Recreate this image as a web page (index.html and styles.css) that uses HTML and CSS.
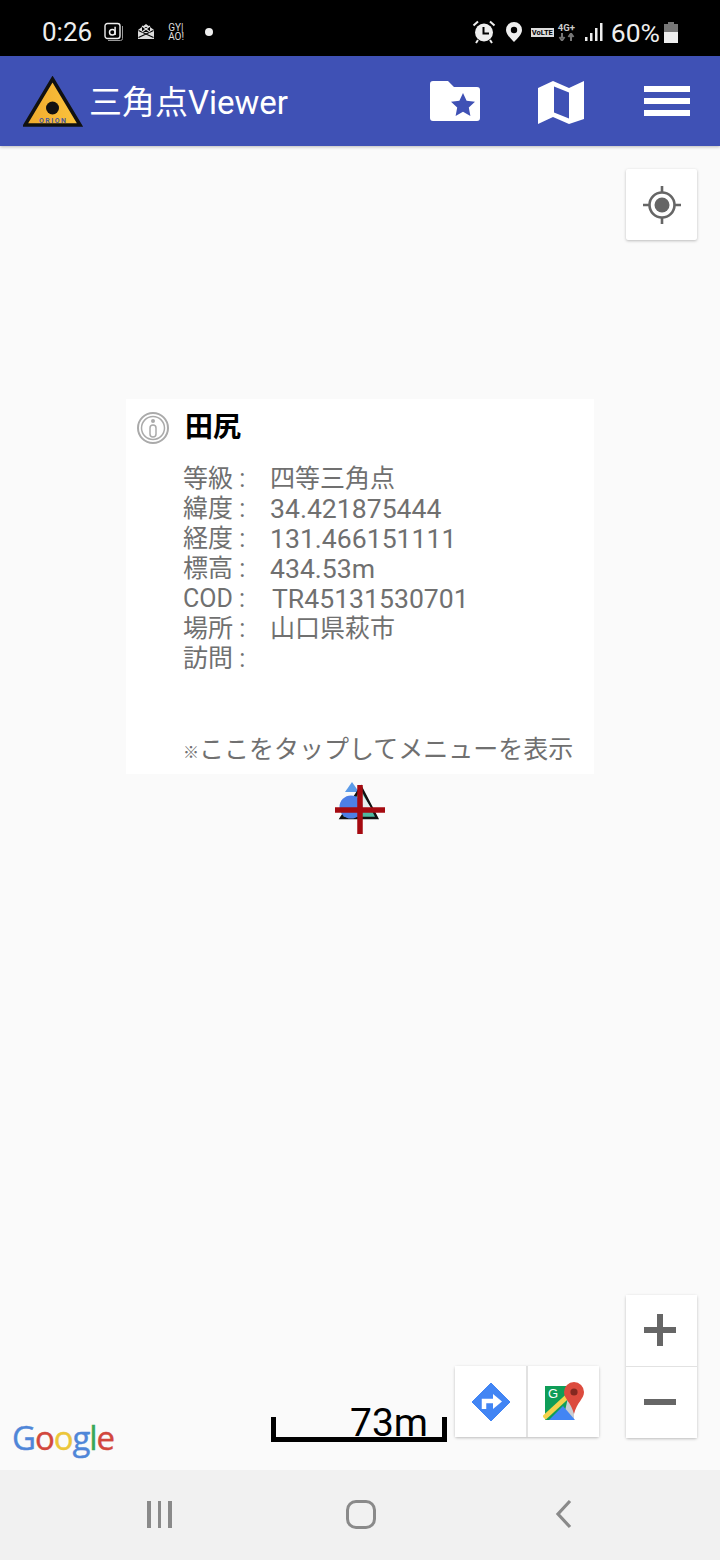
FILE: index.html
```html
<!DOCTYPE html>
<html lang="ja">
<head>
	<meta charset="utf-8" />
	<title>三角点Viewer</title>
	<link rel="stylesheet" href="styles.css">
</head>
<body>
	<div class="status-bar">
		<span class="clock">0:26</span>
		<svg class="st-d" viewBox="0 0 20 20" width="20" height="20">
			<rect x="1" y="1.5" width="15" height="15" rx="2.5" fill="none" stroke="#eee" stroke-width="1.4"/>
			<path d="M18.5 4v12.5a2 2 0 0 1-2 2H4" fill="none" stroke="#999" stroke-width="1"/>
			<circle cx="8.3" cy="10.3" r="2.8" fill="none" stroke="#eee" stroke-width="1.5"/>
			<path d="M11.1 4.8v8.3" stroke="#eee" stroke-width="1.5"/>
		</svg>
		<svg class="st-mail" viewBox="0 0 18 18" width="18" height="18">
			<path d="M1 7l8-6 8 6v9H1z" fill="#ddd"/>
			<path d="M1.5 7.5l15 7M16.5 7.5l-15 7" stroke="#000" stroke-width="1.2"/>
			<rect x="5" y="4" width="8" height="5" fill="#000"/>
			<path d="M5 3l8 6M13 3L5 9" stroke="#ddd" stroke-width="1.3"/>
		</svg>
		<span class="st-gyao">GY|<br>AO!</span>
		<span class="st-dot"></span>
		<span class="st-spacer"></span>
		<svg class="st-alarm" viewBox="0 0 24 24" width="24" height="24">
			<path d="M1.5 5.5L6 1.5M22.5 5.5L18 1.5M6 20l-2 3M18 20l2 3" stroke="#eee" stroke-width="2"/>
			<circle cx="12" cy="12.5" r="9" fill="#eee"/>
			<path d="M11.5 7v6.5H17" fill="none" stroke="#000" stroke-width="2"/>
		</svg>
		<svg class="st-pin" viewBox="0 0 18 20" width="18" height="20">
			<path d="M9 0a8 8 0 0 1 8 8c0 4.500-5 9-8 12-3-3-8-7.500-8-12a8 8 0 0 1 8-8z" fill="#eee"/>
			<circle cx="9" cy="8" r="3.200" fill="#000"/>
		</svg>
		<span class="st-volte">VoLTE</span>
		<span class="st-net">4G+<svg viewBox="0 0 18 8" width="18" height="8"><path d="M4 0v5M1.500 4L4 7.500 6.500 4M13 8V3M10.500 4L13 .5 15.500 4" fill="none" stroke="#777" stroke-width="2"/></svg></span>
		<svg class="st-signal" viewBox="0 0 20 20" width="20" height="20">
			<path d="M2 15h2.500v4H2zM7 11h2.500v8H7zM12 6h2.500v13H12zM17 1h2.500v18H17z" fill="#eee"/>
		</svg>
		<span class="st-battery-text">60%</span>
		<svg class="st-battery" viewBox="0 0 14 21" width="14" height="21">
			<path d="M4 0h6v2h4v8H0V2h4z" fill="#777"/>
			<rect y="10" width="14" height="11" fill="#eee"/>
		</svg>
	</div>

	<header class="app-bar">
		<svg class="logo" viewBox="0 0 60 52" width="60" height="52">
			<defs>
				<linearGradient id="logoFill" x1="0" x2="1" y1="0" y2="0">
					<stop offset="0" stop-color="#f0a92c"/>
					<stop offset="1" stop-color="#fbc53e"/>
				</linearGradient>
			</defs>
			<path d="M29.500 3L57 49H2z" fill="url(#logoFill)" stroke="#111" stroke-width="3.500" stroke-linejoin="miter"/>
			<circle cx="29.500" cy="32" r="6.500" fill="#111"/>
			<text class="logo-text" x="29.500" y="46.500" text-anchor="middle" textLength="27">ORION</text>
		</svg>
		<h1 class="app-title">三角点Viewer</h1>
		<div class="app-actions">
			<svg viewBox="0 0 50 40" width="50" height="40">
				<path d="M3 0h15l6 6h23a3 3 0 0 1 3 3v28a3 3 0 0 1-3 3H3a3 3 0 0 1-3-3V3a3 3 0 0 1 3-3z" fill="#fff"/>
				<path d="M33 12l3.600 7.800 8.400 1-6.200 5.800 1.600 8.400-7.400-4.200-7.400 4.200 1.600-8.400L21 20.800l8.400-1z" fill="#3f51b5"/>
			</svg>
			<svg class="map-icon" viewBox="0 0 46 46" width="46" height="46">
				<path d="M0 10l15-7 16 7 15-7v38l-15 5-16-7-15 7z" fill="#fff"/>
				<path d="M16 8.500l15 6v26l-15-6z" fill="#3f51b5"/>
			</svg>
			<div class="hamburger"><span></span><span></span><span></span></div>
		</div>
	</header>

	<main class="map">
		<button class="ctl ctl-locate">
			<svg viewBox="0 0 40 40" width="40" height="40">
				<circle cx="20" cy="20" r="12.500" fill="none" stroke="#666" stroke-width="2.600"/>
				<circle cx="20" cy="20" r="7.500" fill="#666"/>
				<path d="M20 1v6M20 33v6M1 20h6M33 20h6" stroke="#666" stroke-width="2.600"/>
			</svg>
		</button>

		<section class="info">
			<div class="info-head">
				<svg viewBox="0 0 32 32" width="32" height="32">
					<circle cx="16" cy="16" r="15" fill="none" stroke="#aaa" stroke-width="2"/>
					<circle cx="16" cy="16" r="11.500" fill="none" stroke="#aaa" stroke-width="1.500"/>
					<rect x="13" y="13" width="6" height="12" rx="3" fill="none" stroke="#aaa" stroke-width="1.500"/>
					<circle cx="16" cy="9" r="2" fill="#aaa"/>
				</svg>
				<h2 class="info-title">田尻</h2>
			</div>
			<dl class="info-rows">
				<dt>等級 :</dt><dd>四等三角点</dd>
				<dt>緯度 :</dt><dd class="num">34.421875444</dd>
				<dt>経度 :</dt><dd class="num">131.466151111</dd>
				<dt>標高 :</dt><dd class="num">434.53m</dd>
				<dt>COD :</dt><dd class="num cod">TR45131530701</dd>
				<dt>場所 :</dt><dd>山口県萩市</dd>
				<dt>訪問 :</dt><dd></dd>
			</dl>
			<p class="info-note"><span class="note-mark">※</span>ここをタップしてメニューを表示</p>
		</section>

		<svg class="marker" viewBox="0 0 50 54" width="50" height="54">
			<path d="M17 0l7 10H10z" fill="#5b9be8"/>
			<path d="M26 5l16 31H6z" fill="#4fb8a0" stroke="#111" stroke-width="2.500"/>
			<path d="M26 10L15 26h21z" fill="#e8eeee"/>
			<circle cx="16" cy="25" r="11.500" fill="#4d7fe6"/>
			<path d="M0 28h50M25 3v49" stroke="#a50a10" stroke-width="5.500"/>
		</svg>

		<div class="ctl-group zoom-group">
			<button class="ctl">
				<svg class="zoom-icon" viewBox="0 0 34 34" width="34" height="34"><path d="M17 1v32M1 17h32" stroke="#666" stroke-width="6"/></svg>
			</button>
			<button class="ctl">
				<svg class="zoom-icon" viewBox="0 0 34 34" width="34" height="34"><path d="M1 17h32" stroke="#666" stroke-width="6"/></svg>
			</button>
		</div>

		<div class="ctl-group nav-group">
			<button class="ctl">
				<svg viewBox="0 0 40 40" width="40" height="40">
					<path d="M20 1l19 19-19 19L1 20z" fill="#4285f4" stroke="#4285f4" stroke-linejoin="round" stroke-width="1"/>
					<path d="M13 27v-8h11" fill="none" stroke="#fff" stroke-width="4.500"/>
					<path d="M22 12l9 7.500-9 7.500z" fill="#fff"/>
				</svg>
			</button>
			<button class="ctl">
				<svg viewBox="0 0 42 42" width="42" height="42">
					<path d="M2 5h29v34H2z" fill="#0f9d58"/>
					<path d="M26 12l5 3v24H20z" fill="#c9cdd2"/>
					<path d="M20 25L32 39H6z" fill="#4285f4"/>
					<path d="M1 37L27 13" stroke="#f4d24c" stroke-width="5"/>
					<path d="M31 1a10 10 0 0 1 10 10c0 7-7 10-10 22-3-12-10-15-10-22A10 10 0 0 1 31 1z" fill="#dc4b3e"/>
					<circle cx="31" cy="11" r="3.600" fill="#842820"/>
					<text class="gmap-g" x="5" y="17">G</text>
				</svg>
			</button>
		</div>

		<div class="scale">
			<span class="scale-label">73m</span>
		</div>

		<div class="google"><i class="g-b">G</i><i class="g-r">o</i><i class="g-y">o</i><i class="g-b">g</i><i class="g-g">l</i><i class="g-r">e</i></div>
	</main>

	<nav class="nav-bar">
		<div class="nav-recent"><span></span><span></span><span></span></div>
		<div class="nav-home"></div>
		<svg class="nav-back" viewBox="0 0 18 30" width="18" height="30">
			<path d="M15 2L3 15l12 13" fill="none" stroke="#8a8a8a" stroke-width="3.200"/>
		</svg>
	</nav>
</body>
</html>
```

FILE: styles.css
```css
* {
	box-sizing: border-box;
}
html, body {
	height: 100%;
}
body {
	margin: 0;
	display: flex;
	flex-direction: column;
	width: 720px;
	height: 1560px;
	overflow: hidden;
	font-family: Roboto, "Noto Sans CJK JP", sans-serif;
	background-color: #fafafa;
}
svg {
	display: block;
	flex: none;
}

/* Status bar */
.status-bar {
	display: flex;
	align-items: center;
	height: 56px;
	padding: 8px 42px 0 42px;
	background-color: #000;
	color: #eee;
}
.clock {
	font-size: 26px;
	margin-right: 12px;
}
.st-mail {
	margin-left: 13px;
}
.st-gyao {
	margin-left: 13px;
	font-size: 10px;
	line-height: 9px;
	color: #ddd;
}
.st-dot {
	width: 8px;
	height: 8px;
	margin-left: 21px;
	border-radius: 50%;
	background-color: #eee;
}
.st-spacer {
	flex: 1;
}
.st-pin {
	margin-left: 9px;
}
.st-volte {
	margin-left: 8px;
	padding: 0 1px;
	font-size: 7.500px;
	line-height: 9px;
	font-weight: bold;
	background-color: #ddd;
	color: #000;
}
.st-net {
	margin-left: 4px;
	font-size: 9.500px;
	line-height: 10px;
	font-weight: bold;
	color: #ccc;
}
.st-signal {
	margin-left: 7px;
	margin-right: 8px;
}
.st-battery-text {
	font-size: 26.500px;
}
.st-battery {
	margin-left: 4px;
}

/* App bar */
.app-bar {
	display: flex;
	align-items: center;
	height: 90px;
	padding: 0 30px 0 23px;
	background-color: #3f51b5;
	box-shadow: 0 1px 3px rgba(0, 0, 0, 0.25);
	z-index: 1;
}
.logo {
	margin-top: 2px;
}
.logo-text {
	font-size: 7px;
	font-weight: bold;
	fill: #4a5a9a;
}
.app-title {
	flex: 1;
	margin: -2px 0 0 6px;
	font-size: 33px;
	font-weight: 400;
	color: #fff;
	white-space: nowrap;
}
.app-actions {
	display: flex;
	align-items: center;
	gap: 58px;
}
.map-icon {
	margin-right: 2px;
}
.hamburger {
	display: flex;
	flex-direction: column;
	gap: 6px;
	width: 46px;
}
.hamburger span {
	height: 6px;
	background-color: #fff;
}

/* Map */
.map {
	position: relative;
	flex: 1;
	background-color: #fafafa;
}
.ctl {
	display: flex;
	align-items: center;
	justify-content: center;
	width: 71px;
	height: 71px;
	padding: 0;
	border: 0;
	background-color: #fff;
}
.ctl-locate {
	position: absolute;
	top: 23px;
	left: 626px;
	box-shadow: 0 1px 3px rgba(0, 0, 0, 0.25);
	border-radius: 2px;
}
.ctl-group {
	position: absolute;
	display: flex;
	background-color: #e2e2e2;
	box-shadow: 0 1px 3px rgba(0, 0, 0, 0.25);
	border-radius: 2px;
}
.zoom-group {
	gap: 1px;
	top: 1149px;
	left: 626px;
	flex-direction: column;
}
.zoom-icon {
	margin: -2px 3px 0 0;
}
.nav-group {
	gap: 2px;
	top: 1220px;
	left: 455px;
}

/* Info window */
.info {
	position: absolute;
	top: 253px;
	left: 126px;
	width: 468px;
	height: 375px;
	padding: 12px 0 0 11px;
	background-color: #fff;
}
.info-head {
	display: flex;
	align-items: center;
	gap: 16px;
	margin-bottom: 19px;
}
.info-title {
	margin: 0;
	font-size: 28px;
	line-height: 34px;
	font-weight: 700;
	color: #000;
}
.info-rows {
	display: grid;
	grid-template-columns: 87px 1fr;
	grid-auto-rows: 30px;
	margin: 0 0 0 46px;
	font-size: 25px;
	line-height: 30px;
	color: #707070;
	white-space: nowrap;
}
.info-rows dt, .info-rows dd {
	margin: 0;
}
.info-rows .num {
	font-size: 26.600px;
}
.info-rows .cod {
	padding-left: 2px;
}
.info-note {
	margin: 61px 0 0 46px;
	font-size: 25px;
	line-height: 30px;
	color: #707070;
	white-space: nowrap;
}
.note-mark {
	font-size: 16px;
}
.marker {
	position: absolute;
	top: 636px;
	left: 335px;
}

/* Scale and attribution */
.scale {
	position: absolute;
	top: 1271px;
	left: 271px;
	width: 176px;
	height: 25px;
	border: solid #000;
	border-width: 0 5px 5px;
}
.scale-label {
	position: absolute;
	top: -17px;
	left: 74px;
	font-size: 39px;
	line-height: 46px;
	color: #000;
}
.google {
	position: absolute;
	top: 1271px;
	left: 12px;
	font-family: "Open Sans", sans-serif;
	font-size: 33px;
	line-height: 42px;
	letter-spacing: -1.100px;
}
.google i {
	font-style: normal;
	font-weight: 400;
	-webkit-text-stroke: 0.4px currentColor;
}
.g-b { color: #4f86d8; }
.g-r { color: #d2473d; }
.g-y { color: #ecc63a; }
.g-g { color: #3aa757; }
.gmap-g {
	font-size: 13px;
	fill: #fff;
}

/* Navigation bar */
.nav-bar {
	display: flex;
	align-items: center;
	height: 90px;
	padding-bottom: 2px;
	background-color: #f1f1f1;
}
.nav-recent {
	display: flex;
	gap: 7px;
	margin-left: 147px;
}
.nav-recent span {
	width: 3.500px;
	height: 27px;
	background-color: #8a8a8a;
}
.nav-home {
	width: 30px;
	height: 29px;
	margin-left: 174px;
	border: 3.500px solid #8a8a8a;
	border-radius: 10px;
}
.nav-back {
	margin-left: 179px;
}
```
